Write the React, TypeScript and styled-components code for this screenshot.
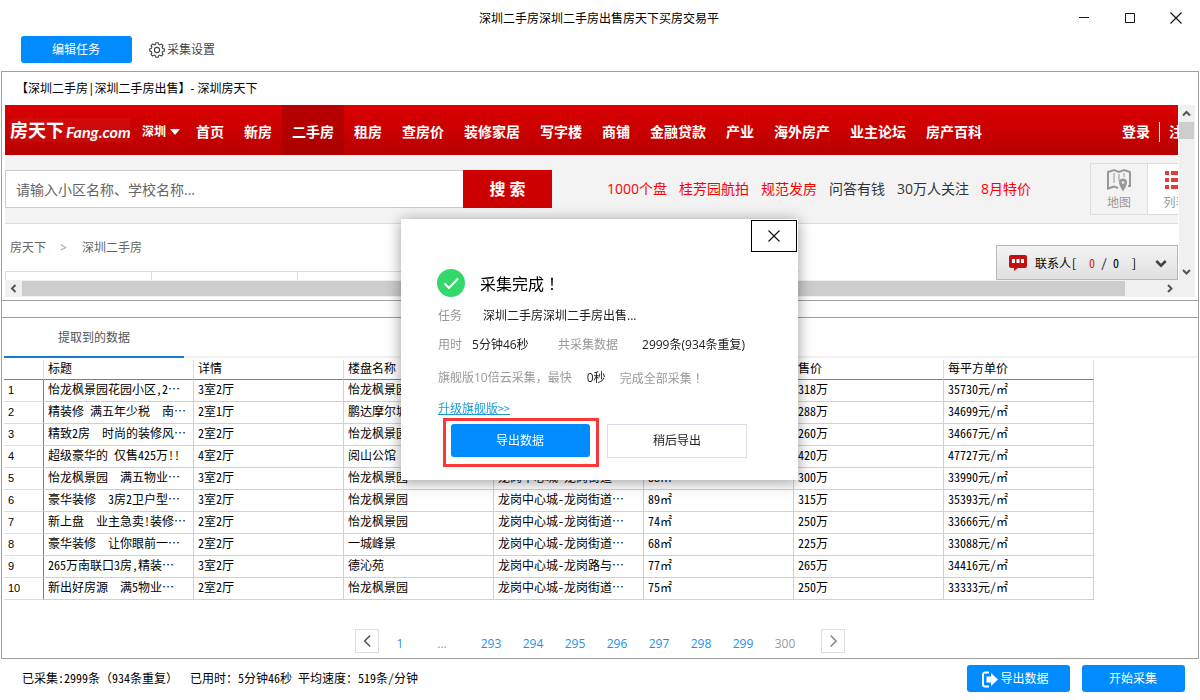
import React from "react";
import styled, { createGlobalStyle, css } from "styled-components";

const uiFont = `"Open Sans", "Noto Sans CJK SC", sans-serif`;
const gridFont = `"Noto Sans Mono CJK SC", "Noto Sans CJK SC", monospace`;

const GlobalStyle = createGlobalStyle`
  *, *::before, *::after { box-sizing: border-box; }
  body {
    margin: 0;
    background: #fff;
    color: #000;
    font-family: ${uiFont};
    font-size: 12px;
    line-height: 20px;
  }
  button, input { font: inherit; margin: 0; }
  button { padding: 0; border: 0; background: none; color: inherit; cursor: pointer; }
  a { color: inherit; text-decoration: none; }
  svg { display: block; flex: none; }
`;

const Window = styled.div`
  display: flex;
  flex-direction: column;
  min-height: 100vh;
  overflow: hidden;
`;

const TitleBar = styled.header`
  display: grid;
  grid-template-columns: 1fr auto 1fr;
  align-items: center;
  height: 36px;
`;

const WindowTitle = styled.h1`
  grid-column: 2;
  margin: 0;
  padding: 2px 2px 0 0;
  font-size: 12px;
  font-weight: 400;
`;

const WindowControls = styled.div`
  display: flex;
  justify-content: flex-end;
  padding-right: 1px;
`;

const WindowButton = styled.button`
  display: flex;
  align-items: center;
  justify-content: center;
  width: 46px;
  height: 32px;
`;

const Toolbar = styled.div`
  display: flex;
  align-items: center;
  gap: 17px;
  height: 35px;
  padding: 0 0 8px 21px;
`;

const PrimaryButton = styled.button<{ $width: number; $withIcon?: boolean }>`
  display: flex;
  align-items: center;
  justify-content: center;
  gap: 2px;
  width: ${(p) => p.$width}px;
  height: 27px;
  padding: 1px ${(p) => (p.$withIcon ? "6px" : "1px")} 0 0;
  border-radius: 3px;
  background: #008cff;
  color: #fff;
`;

const SettingsButton = styled.button`
  display: flex;
  align-items: center;
  gap: 2px;
  padding-top: 1px;
  color: #444;
`;

const Frame = styled.main`
  display: flex;
  flex: 1;
  flex-direction: column;
  margin: 0 1px;
  border: 1px solid #a0a0a0;
`;

const PageTitle = styled.div`
  height: 33px;
  padding-left: 14px;
  line-height: 34px;
`;

const Browser = styled.section`
  display: grid;
  grid-template-columns: minmax(0, 1fr) 17px;
  margin: 0 3px 3px;
`;

const Page = styled.div`
  position: relative;
  height: 175px;
  overflow: hidden;
`;

const SiteNav = styled.nav`
  display: flex;
  align-items: center;
  height: 50px;
  padding-left: 5px;
  background: linear-gradient(#dc0000, #b80000);
  color: #fff;
  font-size: 14px;
  font-weight: 700;
  white-space: nowrap;
`;

const Logo = styled.a`
  display: flex;
  align-items: center;
  width: 120px;
  height: 24px;
  background: rgba(255, 255, 255, 0.04);
  font-size: 18px;
`;

const LogoLatin = styled.span`
  padding: 4px 0 0 2px;
  font-family: Lato, sans-serif;
  font-size: 16px;
  font-style: italic;
`;

const City = styled.button`
  display: flex;
  align-items: center;
  gap: 4px;
  width: 56px;
  height: 50px;
  padding: 4px 0 0 12px;
  font-size: 12px;
  font-weight: 700;
`;

const NavLink = styled.a<{ $active?: boolean }>`
  height: 50px;
  padding: 2px 10px 0;
  line-height: 50px;
  ${(p) => p.$active && css`background: linear-gradient(#b80000, #ac0000);`}
`;

const Account = styled.div`
  display: flex;
  align-items: center;
  width: 56px;
  margin-left: auto;
  padding-top: 4px;
  overflow: hidden;
`;

const AccountLink = styled.a`
  flex: none;
`;

const Divider = styled.span`
  flex: none;
  width: 1px;
  height: 20px;
  margin: 0 9px;
  background: #fff;
`;

const SearchStrip = styled.div`
  display: flex;
  align-items: center;
  height: 69px;
  border-bottom: 1px solid #ddd;
  background: #f3f3f3;
  font-size: 14px;
  white-space: nowrap;
`;

const SearchForm = styled.form`
  display: flex;
  height: 38px;
`;

const SearchInput = styled.input`
  width: 458px;
  padding: 2px 10px 0;
  border: 1px solid #ccc;
  border-right: 0;
  border-radius: 0;
  background: #fff;
  outline: 0;
  &::placeholder { color: #666; opacity: 1; }
`;

const SearchButton = styled.button`
  width: 89px;
  background: #c00;
  color: #fff;
  font-size: 16px;
  font-weight: 700;
`;

const HotLinks = styled.div`
  display: flex;
  gap: 12px;
  padding-left: 55px;
`;

const HotLink = styled.a<{ $hot?: boolean }>`
  color: ${(p) => (p.$hot ? "#f00" : "#333")};
`;

const ViewSwitch = styled.div`
  display: flex;
  width: 88px;
  height: 52px;
  margin-left: auto;
  overflow: hidden;
`;

const ViewButton = styled.button<{ $active?: boolean }>`
  display: flex;
  flex: none;
  flex-direction: column;
  align-items: center;
  justify-content: space-between;
  width: 57px;
  padding: 4px 0 1px;
  border: 1px solid #ddd;
  border-right-width: ${(p) => (p.$active ? "1px" : "0")};
  background: ${(p) => (p.$active ? "#fff" : "transparent")};
  color: #999;
  font-size: 12px;
`;

const Crumbs = styled.div`
  display: flex;
  align-items: center;
  gap: 14px;
  height: 47px;
  padding-left: 5px;
  color: #666;
`;

const CrumbArrow = styled.span`
  width: 8px;
  color: #999;
`;

const FilterRow = styled.div`
  display: flex;
  width: 794px;
  border-top: 1px solid #ddd;
`;

const FilterCell = styled.div`
  width: 146px;
  height: 8px;
  border-left: 1px solid #ddd;
`;

const Contacts = styled.button`
  position: absolute;
  right: 0;
  bottom: 0;
  display: flex;
  align-items: center;
  gap: 8px;
  width: 182px;
  height: 35px;
  padding: 0 10px 0 12px;
  border: 1px solid #b8b8b8;
  background: linear-gradient(#f3f3f3, #e0e0e0);
  font-family: ${gridFont};
  white-space: pre;
`;

const ContactCount = styled.span`
  flex: 1;
  text-align: left;
`;

const Red = styled.span`
  color: #e02020;
`;

const VerticalBar = styled.div`
  display: flex;
  flex-direction: column;
  border-left: 1px solid #fff;
  background: #f0f0f0;
`;

const HorizontalBar = styled.div`
  display: flex;
  grid-column: 1 / -1;
  height: 17px;
  padding-right: 17px;
  background: #f0f0f0;
`;

const ScrollArrow = styled.button<{ $end?: boolean; $side?: boolean }>`
  display: flex;
  flex: none;
  align-items: center;
  justify-content: center;
  width: ${(p) => (p.$side ? "15px" : "17px")};
  height: 17px;
  ${(p) => p.$end && (p.$side ? css`margin-top: auto;` : css`margin-left: auto;`)}
`;

const ThumbY = styled.div`
  width: 15px;
  height: 17px;
  background: #cdcdcd;
`;

const ThumbX = styled.div`
  flex: 0 1 94%;
  height: 16px;
  border-top: 1px solid #f0f0f0;
  background: #cdcdcd;
`;

const Splitter = styled.div`
  height: 18px;
  border: solid #a0a0a0;
  border-width: 1px 0;
`;

const Tabs = styled.div`
  display: flex;
  height: 40px;
  margin-left: 2px;
  border-bottom: 2px solid #f2f2f2;
`;

const Tab = styled.button`
  width: 180px;
  height: 40px;
  padding-top: 2px;
  border-bottom: 2px solid #1979d5;
  color: #555;
`;

const DataTable = styled.table`
  width: 1090px;
  margin: 2px 0 0 2px;
  border-spacing: 0;
  table-layout: fixed;
  font-family: ${gridFont};
  line-height: 16px;
  white-space: pre;
`;

const IndexCol = styled.col`
  width: 40px;
`;

const HeadCell = styled.th`
  height: 20px;
  padding: 0 0 3px 4px;
  border-right: 1px solid #ddd;
  border-bottom: 1px solid #808080;
  font-weight: 400;
  text-align: left;
`;

const IndexCell = styled.th`
  height: 22px;
  padding: 0 0 1px 4px;
  border-right: 1px solid #808080;
  border-bottom: 1px solid #ddd;
  font-family: "Liberation Sans", sans-serif;
  font-size: 11px;
  font-weight: 400;
  text-align: left;
`;

const Cell = styled.td`
  height: 22px;
  padding: 0 0 4px 4px;
  overflow: hidden;
  border-right: 1px solid #d0d0d0;
  border-bottom: 1px solid #d0d0d0;
`;

const Pager = styled.nav`
  display: flex;
  justify-content: center;
  margin-top: auto;
  padding-bottom: 5px;
`;

const PagerArrow = styled.button`
  display: flex;
  align-items: center;
  justify-content: center;
  width: 24px;
  height: 24px;
  border: 1px solid #ddd;
`;

const PageLink = styled.a<{ $muted?: boolean }>`
  width: 42px;
  padding-top: 5px;
  color: ${(p) => (p.$muted ? "#999" : "#1e90f0")};
  line-height: 19px;
  text-align: center;
`;

const PageGroup = styled.div`
  display: flex;
  padding: 0 15px 0 7px;
`;

const StatusBar = styled.footer`
  display: flex;
  align-items: center;
  gap: 12px;
  height: 41px;
  padding: 0 15px 2px 22px;
`;

const StatusText = styled.span`
  margin-right: auto;
  padding-bottom: 2px;
  font-family: ${gridFont};
  white-space: pre;
`;

const Overlay = styled.div`
  position: fixed;
  inset: 0 1px 1px 0;
  display: flex;
  align-items: center;
  justify-content: center;
`;

const Dialog = styled.section`
  width: 397px;
  background: #fff;
  box-shadow: 0 2px 14px rgba(0, 0, 0, 0.4);
`;

const DialogBar = styled.div`
  display: flex;
  justify-content: flex-end;
  padding: 1px 1px 0;
`;

const CloseButton = styled(WindowButton)`
  border: 1px solid #000;
`;

const DialogBody = styled.div`
  padding: 14px 36px 13px;
  color: #222;
`;

const DialogHead = styled.div`
  display: flex;
  align-items: center;
  gap: 15px;
  height: 34px;
`;

const DialogTitle = styled.h2`
  margin: 0;
  color: #000;
  font-size: 16px;
  font-weight: 400;
`;

const CentredMark = styled.span`
  font-family: "Noto Sans CJK TC", sans-serif;
`;

const InfoList = styled.div`
  padding-top: 1px;
`;

const InfoRow = styled.div<{ $height: number }>`
  display: flex;
  align-items: center;
  height: ${(p) => p.$height}px;
  padding-left: 1px;
  white-space: nowrap;
`;

const Label = styled.span<{ $gap: number }>`
  margin-right: ${(p) => p.$gap}px;
  color: #999;
`;

const Value = styled.span<{ $width?: number }>`
  width: ${(p) => (p.$width ? `${p.$width}px` : "auto")};
`;

const UpgradeLink = styled.a`
  color: #1a9bd7;
  font-family: ${gridFont};
  text-decoration: underline;
`;

const DialogActions = styled.div`
  display: flex;
  align-items: flex-start;
  gap: 8px;
  padding-left: 6px;
`;

const Highlight = styled.div`
  padding: 3px 6px 7px 5px;
  border: 3px solid #fa3838;
`;

const ExportButton = styled(PrimaryButton)`
  height: 33px;
`;

const LaterButton = styled.button`
  width: 140px;
  height: 34px;
  margin-top: 6px;
  border: 1px solid #dcdce8;
`;

const navItems = ["首页", "新房", "二手房", "租房", "查房价", "装修家居", "写字楼", "商铺", "金融贷款", "产业", "海外房产", "业主论坛", "房产百科"];

const hotItems: [string, boolean][] = [
  ["1000个盘", true],
  ["桂芳园航拍", true],
  ["规范发房", true],
  ["问答有钱", false],
  ["30万人关注", false],
  ["8月特价", true],
];

const columns = ["标题", "详情", "楼盘名称", "", "", "售价", "每平方单价"];

const rows = [
  ["怡龙枫景园花园小区,2…", "3室2厅", "怡龙枫景园", "", "", "318万", "35730元/㎡"],
  ["精装修 满五年少税  南…", "2室1厅", "鹏达摩尔城", "", "", "288万", "34699元/㎡"],
  ["精致2房  时尚的装修风…", "2室2厅", "怡龙枫景园", "", "", "260万", "34667元/㎡"],
  ["超级豪华的 仅售425万!!", "4室2厅", "阅山公馆", "", "", "420万", "47727元/㎡"],
  ["怡龙枫景园  满五物业…", "3室2厅", "怡龙枫景园", "龙岗中心城-龙岗街道…", "88㎡", "300万", "33990元/㎡"],
  ["豪华装修  3房2卫户型…", "3室2厅", "怡龙枫景园", "龙岗中心城-龙岗街道…", "89㎡", "315万", "35393元/㎡"],
  ["新上盘  业主急卖!装修…", "2室2厅", "怡龙枫景园", "龙岗中心城-龙岗街道…", "74㎡", "250万", "33666元/㎡"],
  ["豪华装修  让你眼前一…", "2室2厅", "一城峰景", "龙岗中心城-龙岗街道…", "68㎡", "225万", "33088元/㎡"],
  ["265万南联口3房,精装…", "3室2厅", "德沁苑", "龙岗中心城-龙岗路与…", "77㎡", "265万", "34416元/㎡"],
  ["新出好房源  满5物业…", "2室2厅", "怡龙枫景园", "龙岗中心城-龙岗街道…", "75㎡", "250万", "33333元/㎡"],
];

const chevrons = {
  up: "M1 6.5 4.5 3 8 6.5",
  down: "M1 3 4.5 6.5 8 3",
  left: "M6.5 1 3 4.5 6.5 8",
  right: "M3 1 6.5 4.5 3 8",
};

const Chevron = ({ dir, size = 9, color = "#555", weight = 2 }: { dir: keyof typeof chevrons; size?: number; color?: string; weight?: number }) => (
  <svg width={size} height={size} viewBox="0 0 9 9" fill="none" stroke={color} strokeWidth={weight}>
    <path d={chevrons[dir]} />
  </svg>
);

const CrossIcon = () => (
  <svg width="12" height="12" viewBox="0 0 12 12" fill="none" stroke="#1a1212" strokeWidth="1.2">
    <path d="M.5.5l11 11M11.5.5l-11 11" />
  </svg>
);

const gearOutline = (() => {
  const pts: string[] = [];
  for (let i = 0; i < 8; i++) {
    const at = (deg: number, r: number) => {
      const a = ((i * 45 + deg) * Math.PI) / 180;
      return `${(8 + r * Math.cos(a)).toFixed(2)} ${(8 + r * Math.sin(a)).toFixed(2)}`;
    };
    pts.push(at(-15, 5.9), at(-9, 7.4), at(9, 7.4), at(15, 5.9));
  }
  return `M${pts.join("L")}Z`;
})();

const GearIcon = () => (
  <svg width="16" height="16" viewBox="0 0 16 16" fill="none" stroke="#444" strokeWidth="1.1" strokeLinejoin="round">
    <path d={gearOutline} />
    <circle cx="8" cy="8" r="2.6" />
  </svg>
);

const MapIcon = () => (
  <svg width="26" height="24" viewBox="0 0 26 24" fill="none" stroke="#999" strokeWidth="2">
    <path d="M12 20l-4-1.500-6 2V4l6-2 5 2 5-2 6 2v14h-2" />
    <path d="M8 5v10M13 6v7M18 5v4" strokeWidth="1" />
    <path d="M17 10.500a4 4 0 0 1 4 4c0 3-4 9-4 9s-4-6-4-9a4 4 0 0 1 4-4z" fill="#999" stroke="none" />
    <circle cx="17" cy="14.500" r="1.300" fill="#f3f3f3" stroke="none" />
  </svg>
);

const ListIcon = () => (
  <svg width="24" height="24" viewBox="0 0 24 24" fill="#e33a3a">
    <path d="M1 3h4v4H1zM7 3h17v4H7zM1 10h4v4H1zM7 10h17v4H7zM1 17h4v4H1zM7 17h17v4H7z" />
  </svg>
);

const ChatIcon = () => (
  <svg width="18" height="16" viewBox="0 0 18 16">
    <path d="M2 0h14a2 2 0 0 1 2 2v9a2 2 0 0 1-2 2H9l-4 3v-3H2a2 2 0 0 1-2-2V2a2 2 0 0 1 2-2z" fill="#c01010" />
    <path d="M3 4h3v4H3zM7.500 4h3v4h-3zM12 4h3v4h-3z" fill="#fff" />
  </svg>
);

const ExportIcon = () => (
  <svg width="16" height="17" viewBox="0 0 16 17">
    <path d="M7 1.500H3a2 2 0 0 0-2 2v10a2 2 0 0 0 2 2h4" fill="none" stroke="#fff" strokeWidth="2" />
    <path d="M4.500 5.500H9V2l7 6.500L9 15v-3.500H4.500z" fill="#fff" />
  </svg>
);

const CheckIcon = () => (
  <svg width="28" height="28" viewBox="0 0 28 28" fill="none">
    <circle cx="14" cy="14" r="14" fill="#33d86b" />
    <path d="M7.500 14.500l4.500 4.500L21 9.500" stroke="#fff" strokeWidth="2" />
  </svg>
);

export default function App() {
  return (
    <>
      <GlobalStyle />
      <Window>
        <TitleBar>
          <WindowTitle>深圳二手房深圳二手房出售房天下买房交易平</WindowTitle>
          <WindowControls>
            <WindowButton aria-label="最小化">
              <svg width="10" height="10" viewBox="0 0 10 10"><path d="M0 4h10v1H0z" fill="#1a1212" /></svg>
            </WindowButton>
            <WindowButton aria-label="最大化">
              <svg width="10" height="10" viewBox="0 0 10 10"><path d="M.5.5h9v9h-9z" fill="none" stroke="#1a1212" /></svg>
            </WindowButton>
            <WindowButton aria-label="关闭"><CrossIcon /></WindowButton>
          </WindowControls>
        </TitleBar>
        <Toolbar>
          <PrimaryButton $width={111}>编辑任务</PrimaryButton>
          <SettingsButton><GearIcon />采集设置</SettingsButton>
        </Toolbar>

        <Frame>
          <PageTitle>【深圳二手房|深圳二手房出售】- 深圳房天下</PageTitle>
          <Browser>
            <Page>
              <SiteNav>
                <Logo href="#">房天下<LogoLatin>Fang.com</LogoLatin></Logo>
                <City>
                  深圳
                  <svg width="10" height="6" viewBox="0 0 10 6"><path d="M0 0h10L5 6z" fill="#fff" /></svg>
                </City>
                {navItems.map((n) => (
                  <NavLink key={n} href="#" $active={n === "二手房"}>{n}</NavLink>
                ))}
                <Account>
                  <AccountLink href="#">登录</AccountLink>
                  <Divider />
                  <AccountLink href="#">注册</AccountLink>
                </Account>
              </SiteNav>
              <SearchStrip>
                <SearchForm>
                  <SearchInput aria-label="搜索" placeholder="请输入小区名称、学校名称..." />
                  <SearchButton type="button">搜 索</SearchButton>
                </SearchForm>
                <HotLinks>
                  {hotItems.map(([text, hot]) => (
                    <HotLink key={text} href="#" $hot={hot}>{text}</HotLink>
                  ))}
                </HotLinks>
                <ViewSwitch>
                  <ViewButton><MapIcon />地图</ViewButton>
                  <ViewButton $active><ListIcon />列表</ViewButton>
                </ViewSwitch>
              </SearchStrip>
              <Crumbs>
                <a href="#">房天下</a>
                <CrumbArrow>&gt;</CrumbArrow>
                <a href="#">深圳二手房</a>
              </Crumbs>
              <FilterRow>
                <FilterCell /><FilterCell /><FilterCell /><FilterCell /><FilterCell />
              </FilterRow>
              <Contacts>
                <ChatIcon />
                <ContactCount>联系人[  <Red>0</Red> / 0  ]</ContactCount>
                <Chevron dir="down" size={12} color="#444" />
              </Contacts>
            </Page>
            <VerticalBar>
              <ScrollArrow $side aria-label="向上滚动"><Chevron dir="up" /></ScrollArrow>
              <ThumbY />
              <ScrollArrow $side $end aria-label="向下滚动"><Chevron dir="down" /></ScrollArrow>
            </VerticalBar>
            <HorizontalBar>
              <ScrollArrow aria-label="向左滚动"><Chevron dir="left" /></ScrollArrow>
              <ThumbX />
              <ScrollArrow $end aria-label="向右滚动"><Chevron dir="right" /></ScrollArrow>
            </HorizontalBar>
          </Browser>
          <Splitter />
          <Tabs><Tab>提取到的数据</Tab></Tabs>
          <DataTable>
            <colgroup>
              <IndexCol />
              {columns.map((_, i) => <col key={i} />)}
            </colgroup>
            <thead>
              <tr>
                <HeadCell />
                {columns.map((c, i) => <HeadCell key={i} scope="col">{c}</HeadCell>)}
              </tr>
            </thead>
            <tbody>
              {rows.map((row, r) => (
                <tr key={r}>
                  <IndexCell scope="row">{r + 1}</IndexCell>
                  {row.map((c, i) => <Cell key={i}>{c}</Cell>)}
                </tr>
              ))}
            </tbody>
          </DataTable>
          <Pager>
            <PagerArrow aria-label="上一页"><Chevron dir="left" size={14} weight={1} /></PagerArrow>
            <PageLink href="#">1</PageLink>
            <PageLink as="span" $muted>...</PageLink>
            <PageGroup>
              {[293, 294, 295, 296, 297, 298, 299, 300].map((n) => (
                <PageLink key={n} href="#" $muted={n === 300}>{n}</PageLink>
              ))}
            </PageGroup>
            <PagerArrow aria-label="下一页"><Chevron dir="right" size={14} color="#888" weight={1} /></PagerArrow>
          </Pager>
        </Frame>

        <StatusBar>
          <StatusText>已采集:2999条（934条重复）  已用时：5分钟46秒 平均速度：519条/分钟</StatusText>
          <PrimaryButton $width={103} $withIcon><ExportIcon />导出数据</PrimaryButton>
          <PrimaryButton $width={103}>开始采集</PrimaryButton>
        </StatusBar>
      </Window>

      <Overlay>
        <Dialog role="dialog" aria-labelledby="done-title">
          <DialogBar>
            <CloseButton aria-label="关闭"><CrossIcon /></CloseButton>
          </DialogBar>
          <DialogBody>
            <DialogHead>
              <CheckIcon />
              <DialogTitle id="done-title">采集完成<CentredMark>！</CentredMark></DialogTitle>
            </DialogHead>
            <InfoList>
              <InfoRow $height={30}>
                <Label $gap={21}>任务</Label>
                <Value>深圳二手房深圳二手房出售...</Value>
              </InfoRow>
              <InfoRow $height={28}>
                <Label $gap={10}>用时</Label>
                <Value $width={86}>5分钟46秒</Value>
                <Label $gap={24}>共采集数据</Label>
                <Value>2999条(934条重复)</Value>
              </InfoRow>
              <InfoRow $height={38}>
                <Label $gap={15}>旗舰版10倍云采集，最快</Label>
                <Value $width={33}>0秒</Value>
                <Label $gap={0}>完成全部采集<CentredMark>！</CentredMark></Label>
              </InfoRow>
              <InfoRow $height={21}>
                <UpgradeLink href="#">升级旗舰版&gt;&gt;</UpgradeLink>
              </InfoRow>
            </InfoList>
            <DialogActions>
              <Highlight>
                <ExportButton $width={139}>导出数据</ExportButton>
              </Highlight>
              <LaterButton>稍后导出</LaterButton>
            </DialogActions>
          </DialogBody>
        </Dialog>
      </Overlay>
    </>
  );
}
